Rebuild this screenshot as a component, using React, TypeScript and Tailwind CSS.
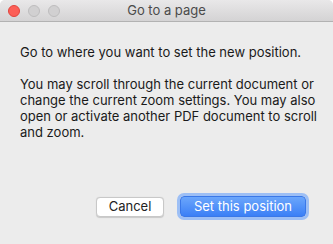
import React from "react";

export default function App() {
  const font = { fontFamily: 'Inter, "Liberation Sans", Arial, sans-serif' };
  return (
    <div className="w-[333px] h-[244px] bg-[#ececec] flex flex-col overflow-hidden rounded-t-[5px]" style={font}>
      <div className="h-[22px] shrink-0 relative flex items-center justify-center bg-gradient-to-b from-[#e9e8e9] to-[#d4d3d4] border-b border-[#b2b2b2]">
        <div className="absolute left-[8px] top-[5px] flex gap-[8px]">
          <div className="w-[12px] h-[12px] rounded-full bg-[#fc5f57] border border-[#e1443d]" />
          <div className="w-[12px] h-[12px] rounded-full bg-[#d1d0d1] border border-[#bdbcbd]" />
          <div className="w-[12px] h-[12px] rounded-full bg-[#d1d0d1] border border-[#bdbcbd]" />
        </div>
        <span className="text-[13px] text-[#4b4b4b] leading-none">Go to a page</span>
      </div>
      <div className="flex-1 flex flex-col pl-[20px] pr-[8px] pt-[22px] text-[13px] leading-[16px] text-[#1a1a1a]">
        <p>Go to where you want to set the new position.</p>
        <p className="mt-[16px]">
          You may scroll through the current document or change the current zoom settings. You may also open or activate another PDF document to scroll and zoom.
        </p>
        <div className="mt-auto mb-[27px] flex justify-end items-center gap-[16px] pr-[19px]">
          <button className="h-[20px] w-[68px] rounded-[4px] bg-white border border-[#c8c8c8] shadow-[0_0.5px_1px_rgba(0,0,0,0.15)] text-[13px] text-[#222] leading-none">
            Cancel
          </button>
          <button className="h-[21px] w-[126px] rounded-[4px] bg-gradient-to-b from-[#6ba6fb] to-[#3b7ff6] border border-[#3a78e8] ring-[3px] ring-[#9dbff5] text-[13px] text-white leading-none">
            Set this position
          </button>
        </div>
      </div>
    </div>
  );
}
